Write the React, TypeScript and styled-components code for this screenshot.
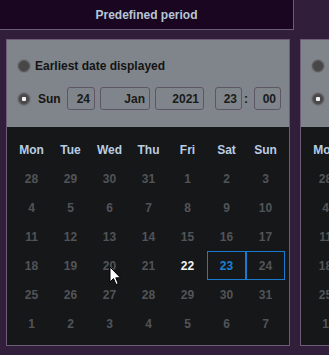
import React from 'react';
import styled, { createGlobalStyle } from 'styled-components';

const GlobalStyle = createGlobalStyle`
  body {
    margin: 0;
    background: #311e3a;
    overflow: hidden;
    font-family: "Liberation Sans", Arial, sans-serif;
  }
`;

const weekDays = ['Mon', 'Tue', 'Wed', 'Thu', 'Fri', 'Sat', 'Sun'];

const days = [
  28, 29, 30, 31, 1, 2, 3,
  4, 5, 6, 7, 8, 9, 10,
  11, 12, 13, 14, 15, 16, 17,
  18, 19, 20, 21, 22, 23, 24,
  25, 26, 27, 28, 29, 30, 31,
  1, 2, 3, 4, 5, 6, 7,
];

type DayState = 'normal' | 'today' | 'selected' | 'range';

const dayState = (index: number): DayState => {
  if (index === 25) return 'today';
  if (index === 26) return 'selected';
  if (index === 27) return 'range';
  return 'normal';
};

const CalendarPanel = () => {
  return (
    <Panel>
      <Options>
        <OptionRow>
          <Radio />
          <OptionLabel>Earliest date displayed</OptionLabel>
        </OptionRow>
        <OptionRow>
          <Radio checked />
          <DayName>Sun</DayName>
          <Field width={28}>24</Field>
          <Field width={50} gap={5}>Jan</Field>
          <Field width={49} gap={5}>2021</Field>
          <Field width={27} gap={11}>23</Field>
          <Colon>:</Colon>
          <Field width={27}>00</Field>
        </OptionRow>
      </Options>
      <Calendar>
        {weekDays.map((d) => (
          <WeekDay key={d}>{d}</WeekDay>
        ))}
        {days.map((d, i) => (
          <Day key={i} state={dayState(i)}>
            {d}
          </Day>
        ))}
      </Calendar>
    </Panel>
  );
};

const Cursor = () => (
  <CursorWrap>
    <svg width="13" height="20" viewBox="0 0 13 20">
      <path
        d="M1 1 L1 16 L4.5 12.5 L7 18.5 L9.2 17.6 L6.8 11.8 L11.5 11.8 Z"
        fill="#ffffff"
        stroke="#000000"
        strokeWidth="1"
        strokeLinejoin="round"
      />
    </svg>
  </CursorWrap>
);

const App = () => {
  return (
    <Page>
      <GlobalStyle />
      <Header>Predefined period</Header>
      <PanelRow>
        <CalendarPanel />
        <CalendarPanel />
      </PanelRow>
      <Cursor />
    </Page>
  );
};

export default App;

const Page = styled.div`
  position: relative;
  width: 329px;
  height: 355px;
  overflow: hidden;
  background: #311e3a;
`;

const Header = styled.div`
  box-sizing: border-box;
  width: 294px;
  height: 30px;
  display: flex;
  align-items: center;
  justify-content: center;
  background: #1a0620;
  border-right: 1px solid #6c5c78;
  border-bottom: 1px solid #6c5c78;
  color: #b6c6d6;
  font-size: 12px;
  font-weight: bold;
`;

const PanelRow = styled.div`
  display: flex;
  gap: 10px;
  margin-top: 9px;
  padding-left: 6px;
`;

const Panel = styled.div`
  flex-shrink: 0;
  box-sizing: border-box;
  width: 284px;
  height: 307px;
  border: 1px solid #6c5c78;
  display: flex;
  flex-direction: column;
`;

const Options = styled.div`
  box-sizing: border-box;
  height: 87px;
  padding: 15px 0 0 11px;
  background: #80858b;
  display: flex;
  flex-direction: column;
  gap: 10px;
`;

const OptionRow = styled.div`
  display: flex;
  align-items: center;
  min-height: 22px;
  white-space: nowrap;
`;

const Radio = styled.span<{ checked?: boolean }>`
  box-sizing: border-box;
  flex-shrink: 0;
  width: 12px;
  height: 12px;
  border-radius: 50%;
  background: ${({ checked }) =>
    checked
      ? 'radial-gradient(circle, #f4f4f4 0 2px, #4a4a4a 2.5px)'
      : '#474747'};
  border: 1px solid #5a5a5e;
  box-shadow: 0 0 0 1px rgba(110, 110, 116, 0.6);
`;

const OptionLabel = styled.span`
  margin-left: 5px;
  color: #141414;
  font-size: 12px;
  font-weight: bold;
`;

const DayName = styled.span`
  margin-left: 8px;
  width: 21px;
  color: #141414;
  font-size: 12px;
  font-weight: bold;
`;

const Field = styled.span<{ width: number; gap?: number }>`
  box-sizing: border-box;
  flex-shrink: 0;
  width: ${({ width }) => width}px;
  height: 23px;
  margin-left: ${({ gap }) => gap ?? 8}px;
  padding-right: 4px;
  display: flex;
  align-items: center;
  justify-content: flex-end;
  border: 1px solid #5e5664;
  border-radius: 3px;
  color: #1a1a1a;
  font-size: 12px;
  font-weight: bold;
`;

const Colon = styled.span`
  width: 8px;
  margin-left: 0;
  margin-right: -4px;
  text-align: center;
  color: #1a1a1a;
  font-size: 12px;
  font-weight: bold;
`;

const Calendar = styled.div`
  flex: 1;
  box-sizing: border-box;
  padding: 8px 0 0 5px;
  background: #161719;
  display: grid;
  grid-template-columns: repeat(7, 39px);
  grid-auto-rows: 29px;
  align-content: start;
`;

const WeekDay = styled.div`
  display: flex;
  align-items: center;
  justify-content: center;
  color: #b9cde2;
  font-size: 12px;
  font-weight: bold;
`;

const dayColor: Record<DayState, string> = {
  normal: '#515457',
  today: '#f2f2f2',
  selected: '#1a80d4',
  range: '#515457',
};

const Day = styled.div<{ state: DayState }>`
  box-sizing: border-box;
  display: flex;
  align-items: center;
  justify-content: center;
  color: ${({ state }) => dayColor[state]};
  font-size: 12px;
  font-weight: bold;
  border: 1px solid
    ${({ state }) =>
      state === 'selected' || state === 'range' ? '#1a7ad0' : 'transparent'};
`;

const CursorWrap = styled.div`
  position: absolute;
  left: 109px;
  top: 266px;
  width: 13px;
  height: 20px;
  line-height: 0;
`;
